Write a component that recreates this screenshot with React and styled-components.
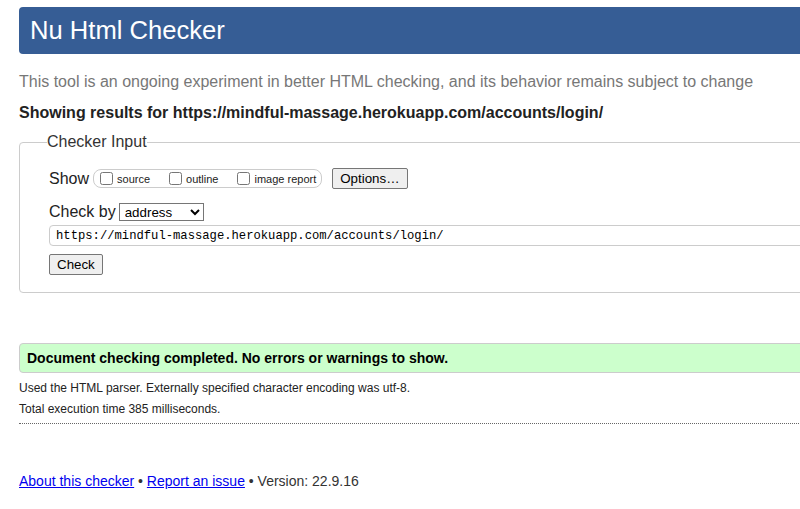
import React from 'react'
import styled, { createGlobalStyle } from 'styled-components'

const Global = createGlobalStyle`
  html, body {
    margin: 0;
    padding: 0;
    overflow: hidden;
    background: #fff;
  }
  body {
    font-family: Arial, "Liberation Sans", sans-serif;
    color: #222;
  }
`

const Page = styled.div`
  width: 1100px;
  padding: 7px 0 0 19px;
`

const Header = styled.h1`
  margin: 0;
  background: #365d95;
  color: #fff;
  font-weight: normal;
  font-size: 25.6px;
  line-height: 29px;
  padding: 9px 11px;
  border-radius: 4px 0 0 4px;
`

const Intro = styled.p`
  margin: 19px 0 0;
  font-size: 16px;
  line-height: 18px;
  color: #777;
`

const Showing = styled.p`
  margin: 13px 0 0;
  font-size: 16px;
  line-height: 18px;
  font-weight: bold;
`

const Fieldset = styled.fieldset`
  margin: 11px 0 0;
  padding: 4px 28px 17px 29px;
  border: 1px solid #ccc;
  border-radius: 4px;
`

const Legend = styled.legend`
  padding: 0;
  margin-left: -2px;
  font-size: 16px;
  color: #333;
`

const Row = styled.div`
  display: flex;
  align-items: center;
  margin-top: ${p => p.$top || 0}px;
  font-size: 16px;
`

const Group = styled.div`
  display: flex;
  align-items: center;
  height: 17px;
  padding: 0 5px 0 6px;
  border: 1px solid #ccc;
  border-radius: 8px;
  margin-left: 4px;
`

const Option = styled.label`
  display: flex;
  align-items: center;
  font-size: 11px;
  margin-right: ${p => p.$gap || 0}px;
`

const Box = styled.input`
  margin: 0 4px 0 0;
  width: 13px;
  height: 13px;
`

const Button = styled.button`
  font-family: Arial, "Liberation Sans", sans-serif;
  font-size: 13.33px;
  color: #000;
  background: #efefef;
  border: 1px solid #767676;
  border-radius: 2px;
  padding: 1px 7px;
  height: 21px;
  margin-left: ${p => p.$left || 0}px;
  margin-top: ${p => p.$top || 0}px;
`

const Select = styled.select`
  font-family: Arial, "Liberation Sans", sans-serif;
  font-size: 13.33px;
  height: 18px;
  width: 85px;
  margin-left: 3px;
  padding: 0 0 0 1px;
  border: 1px solid #767676;
  border-radius: 0;
  background: #fff;
  color: #000;
`

const UrlInput = styled.input`
  display: block;
  box-sizing: border-box;
  width: 100%;
  height: 21px;
  margin-top: 4px;
  padding: 0 5px 0 6px;
  font-family: "Liberation Mono", "DejaVu Sans Mono", monospace;
  font-size: 12.2px;
  color: #000;
  border: 1px solid #ccc;
  border-radius: 4px;
`

const Result = styled.p`
  margin: 50px 0 0;
  padding: 0 7px;
  height: 28px;
  line-height: 28px;
  background: #ccffcc;
  border: 1px solid #ccc;
  border-radius: 4px 0 0 4px;
  font-size: 14px;
  font-weight: bold;
  color: #000;
`

const Details = styled.div`
  border-bottom: 1px dotted #666;
  padding: 8px 0 7px;
  font-size: 12px;
  color: #222;
`

const Line = styled.p`
  margin: ${p => p.$top || 0}px 0 0;
  line-height: 14px;
`

const Footer = styled.p`
  margin: 49px 0 0;
  font-size: 14px;
  line-height: 16px;
  color: #333;
`

const Link = styled.a`
  color: #0000ee;
  text-decoration: underline;
`

export default function App() {
  const url = 'https://mindful-massage.herokuapp.com/accounts/login/'
  return (
    <>
      <Global />
      <Page>
        <Header>Nu Html Checker</Header>
        <Intro>This tool is an ongoing experiment in better HTML checking, and its behavior remains subject to change</Intro>
        <Showing>Showing results for {url}</Showing>
        <Fieldset>
          <Legend>Checker Input</Legend>
          <Row $top={13}>
            Show
            <Group>
              <Option $gap={19}><Box type="checkbox" />source</Option>
              <Option $gap={19}><Box type="checkbox" />outline</Option>
              <Option><Box type="checkbox" />image report</Option>
            </Group>
            <Button $left={10}>Options…</Button>
          </Row>
          <Row $top={14}>
            Check by
            <Select defaultValue="address">
              <option value="address">address</option>
              <option value="file">file upload</option>
              <option value="text">text input</option>
            </Select>
          </Row>
          <UrlInput defaultValue={url} />
          <Button $top={8}>Check</Button>
        </Fieldset>
        <Result>Document checking completed. No errors or warnings to show.</Result>
        <Details>
          <Line>Used the HTML parser. Externally specified character encoding was utf-8.</Line>
          <Line $top={7}>Total execution time 385 milliseconds.</Line>
        </Details>
        <Footer>
          <Link href="#">About this checker</Link> • <Link href="#">Report an issue</Link> • Version: 22.9.16
        </Footer>
      </Page>
    </>
  )
}
